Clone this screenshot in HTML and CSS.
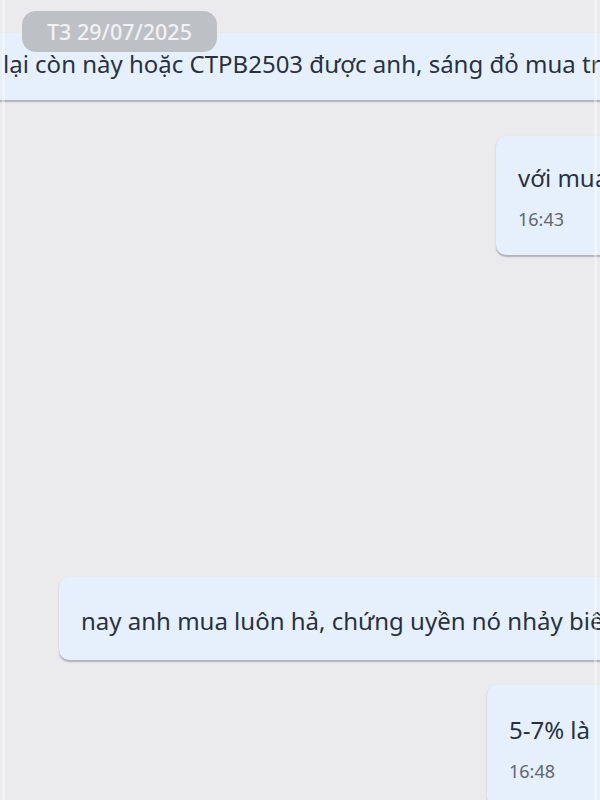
FILE: index.html
```html
<!DOCTYPE html>
<html lang="vi">
<head>
<meta charset="utf-8">
<title>Chat</title>
<link rel="stylesheet" href="styles.css">
</head>
<body>
<div class="chat">
  <div class="date-pill">T3 29/07/2025</div>
  <div class="row row-first">
    <div class="bubble bubble-first"><p class="msg">lại còn này hoặc CTPB2503 được anh, sáng đỏ mua tr</p></div>
  </div>
  <div class="row row-b2">
    <div class="bubble bubble-right b2"><p class="msg">với mua</p><p class="time">16:43</p></div>
  </div>
  <div class="row row-b3">
    <div class="bubble b3"><p class="msg">nay anh mua luôn hả, chứng uyền nó nhảy biên</p></div>
  </div>
  <div class="row row-b4">
    <div class="bubble bubble-right b4"><p class="msg">5-7% là</p><p class="time">16:48</p></div>
  </div>
  <div class="edge edge-left"></div>
  <div class="edge edge-right"></div>
</div>
</body>
</html>
```
FILE: styles.css
```css
html, body {
  margin: 0;
  padding: 0;
  background: #ebebed;
}
body {
  width: 600px;
  height: 800px;
  overflow: hidden;
  font-family: "Noto Sans", "Open Sans", sans-serif;
  color: #29313f;
}
.chat {
  position: relative;
  width: 600px;
  height: 800px;
  overflow: hidden;
  display: flex;
  flex-direction: column;
}
.date-pill {
  position: absolute;
  left: 22px;
  top: 11px;
  width: 195px;
  height: 41px;
  border-radius: 14px;
  background: rgba(184, 187, 192, 0.9);
  color: #f1f2f4;
  font-size: 21.5px;
  font-weight: 500;
  display: flex;
  align-items: center;
  justify-content: center;
  z-index: 2;
}
.row {
  display: flex;
  flex-shrink: 0;
}
.bubble {
  background: #e6f0fc;
  border-radius: 10px;
  box-shadow: 0 1.5px 1.5px rgba(60, 70, 90, 0.35);
  padding: 25px 22px 25px;
  white-space: nowrap;
  flex-shrink: 0;
}
.msg {
  margin: 0;
  font-size: 24px;
  line-height: 35px;
}
.time {
  margin: 13px 0 0;
  font-size: 18px;
  line-height: 22px;
  color: #5f6673;
}
.row-first {
  margin-top: 33px;
}
.bubble-first {
  margin-left: -20px;
  padding: 13px 40px 19px 23px;
  width: 680px;
}
.row-b2 {
  margin-top: 36px;
}
.b2 {
  margin-left: 496px;
  width: 200px;
  padding-top: 24px;
}
.row-b3 {
  margin-top: 322px;
}
.b3 {
  margin-left: 59px;
  width: 640px;
  padding-top: 26px;
  padding-bottom: 22px;
}
.row-b4 {
  margin-top: 25px;
}
.b4 {
  margin-left: 487px;
  width: 200px;
  padding-top: 27px;
}
.edge {
  position: absolute;
  top: 0;
  bottom: 0;
  width: 3px;
  background: rgba(255, 255, 255, 0.35);
}
.edge-left {
  left: 2px;
}
.edge-right {
  left: 594px;
}
```
